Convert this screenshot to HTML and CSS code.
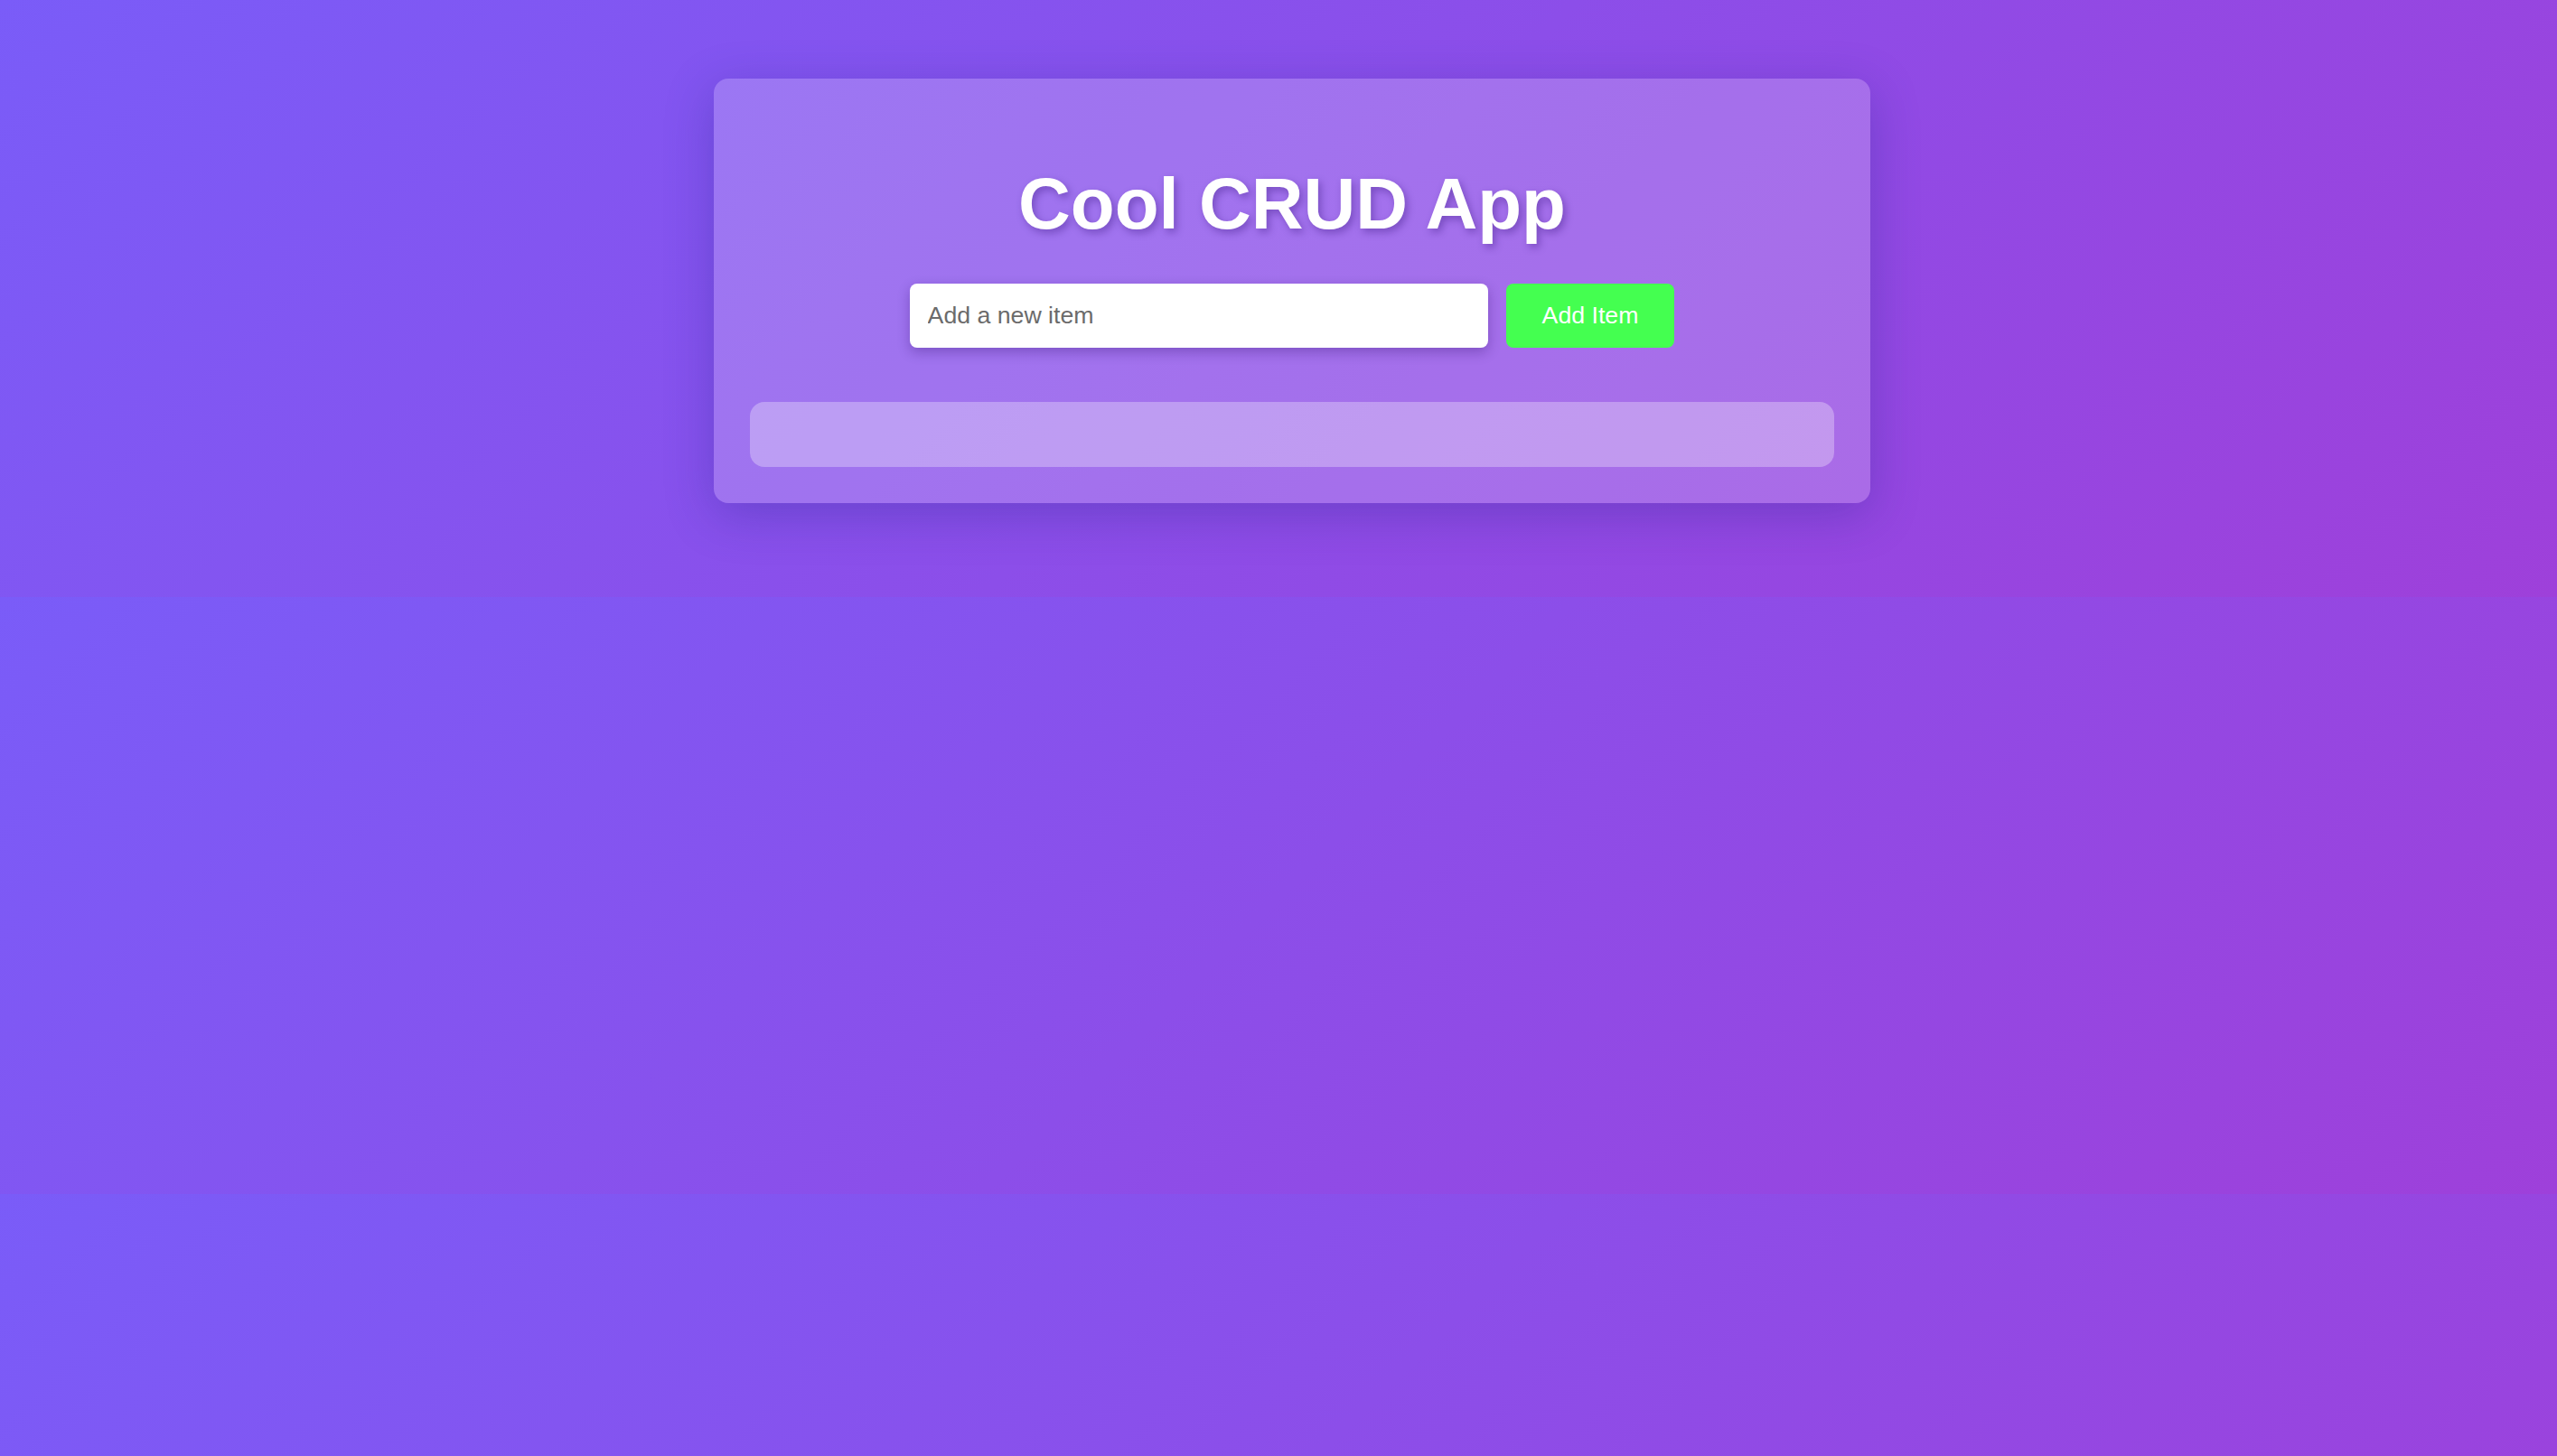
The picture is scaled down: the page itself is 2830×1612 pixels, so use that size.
FILE: index.html
```html
<!DOCTYPE html>
<html lang="en">
<head>
<meta charset="utf-8">
<title>Cool CRUD App</title>
<link rel="stylesheet" href="styles.css">
</head>
<body>
  <div class="container">
    <h1 class="title">Cool CRUD App</h1>
    <form class="add-form" onsubmit="return false;">
      <input class="item-input" type="text" placeholder="Add a new item">
      <button class="add-btn" type="submit">Add Item</button>
    </form>
    <div class="item-list"></div>
  </div>
</body>
</html>
```

FILE: styles.css
```css
html {
  background: linear-gradient(135deg, #7a5cf8 0%, #9e40da 100%);
}

body {
  margin: 0;
  padding: 87px 0 104px 30px;
  font-family: "Liberation Sans", Arial, sans-serif;
}

.container {
  width: 1280px;
  box-sizing: border-box;
  margin: 0 auto;
  padding: 40px;
  border-radius: 16px;
  background: rgba(255, 255, 255, 0.2);
  box-shadow: 0 13px 53px rgba(31, 38, 135, 0.3);
}

.title {
  margin: 53px 0 0;
  font-size: 80px;
  font-weight: bold;
  line-height: normal;
  color: #ffffff;
  text-align: center;
  text-shadow: 3px 4px 9px rgba(40, 10, 110, 0.35);
}

.add-form {
  display: flex;
  justify-content: center;
  gap: 20px;
  margin-top: 42px;
}

.item-input {
  width: 640px;
  box-sizing: border-box;
  padding: 20px;
  border: none;
  border-radius: 8px;
  font-family: "Liberation Sans", Arial, sans-serif;
  font-size: 26.7px;
  line-height: normal;
  color: #333;
  background: #ffffff;
  box-shadow: 0 5px 14px rgba(40, 10, 100, 0.3);
  outline: none;
}

.item-input::placeholder {
  color: #6b6b6b;
}

.add-btn {
  padding: 20px 40px;
  border: none;
  border-radius: 8px;
  font-family: "Liberation Sans", Arial, sans-serif;
  font-size: 26.7px;
  line-height: normal;
  color: #ffffff;
  background: #44ff50;
  cursor: pointer;
}

.item-list {
  margin-top: 60px;
  height: 72px;
  border-radius: 16px;
  background: rgba(255, 255, 255, 0.3);
}
```
